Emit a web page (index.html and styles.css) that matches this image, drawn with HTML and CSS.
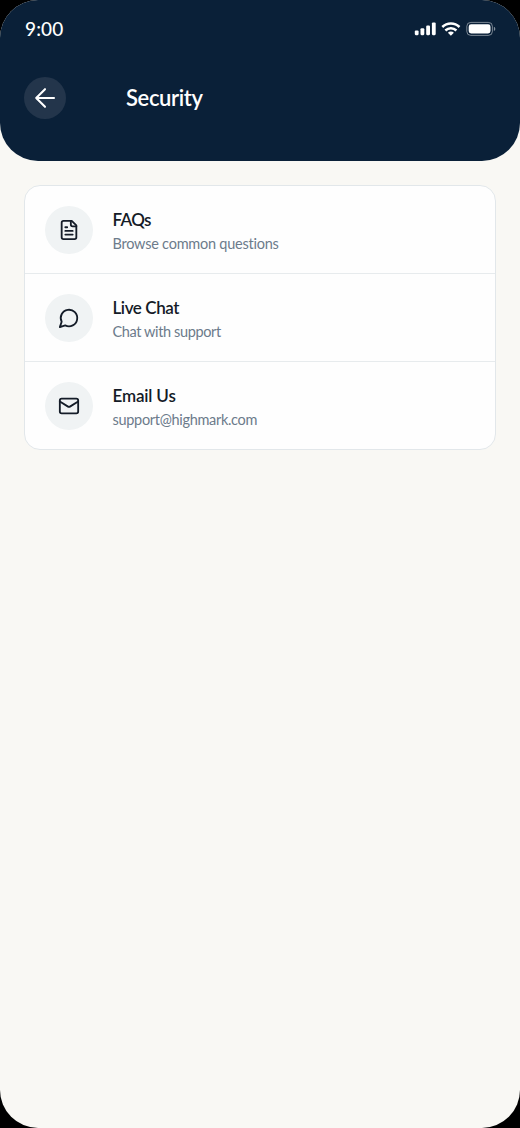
FILE: index.html
```html
<!DOCTYPE html>
<html lang="en">
<head>
<meta charset="utf-8">
<title>Security</title>
<link rel="stylesheet" href="styles.css">
</head>
<body>
<div class="screen">
  <header class="header">
    <div class="status">
      <span class="time">9:00</span>
      <svg class="status-icons" width="82" height="16" viewBox="0 0 82 16" fill="#fff">
        <rect x="0.8" y="9.4" width="3.8" height="4.8" rx="1.1"/>
        <rect x="6.5" y="7.2" width="3.8" height="7" rx="1.1"/>
        <rect x="12.2" y="4.6" width="3.8" height="9.6" rx="1.1"/>
        <rect x="17.9" y="1.4" width="3.8" height="12.8" rx="1.1"/>
        <g fill="none" stroke="#fff" stroke-width="2.5">
          <path d="M28.3 6a12.3 12.3 0 0 1 17.2 0"/>
          <path d="M31.4 9.5a7.9 7.9 0 0 1 11 0"/>
        </g>
        <path d="M33.9 11.8a4.2 4.2 0 0 1 6 0L36.9 14.8z"/>
        <rect x="52.8" y="1.4" width="25.6" height="13" rx="4" fill="none" stroke="#fff" stroke-opacity=".45"/>
        <rect x="54.7" y="3.3" width="21.8" height="9.2" rx="2.4"/>
        <path d="M79.9 5.7v4.4a2.4 2.4 0 0 0 0-4.4z" fill-opacity=".5"/>
      </svg>
    </div>
    <div class="nav">
      <div class="back">
        <svg width="26" height="26" viewBox="0 0 26 26" fill="none" stroke="#fff" stroke-width="2.1" stroke-linecap="round" stroke-linejoin="round"><path d="M22 13H4.2M13 4.2L4.2 13l8.8 8.8"/></svg>
      </div>
      <h1 class="title">Security</h1>
    </div>
  </header>
  <main class="card">
    <div class="row">
      <div class="bubble"><svg class="icon" viewBox="0 0 24 24"><path d="M15 2H6a2 2 0 0 0-2 2v16a2 2 0 0 0 2 2h12a2 2 0 0 0 2-2V7z"/><path d="M14 2v4a2 2 0 0 0 2 2h4M10 9H8M16 13H8M16 17H8"/></svg></div>
      <div class="text"><div class="name faq">FAQs</div><div class="desc browse">Browse common questions</div></div>
    </div>
    <div class="row">
      <div class="bubble"><svg class="icon" viewBox="0 0 24 24"><path d="M7.9 20A9 9 0 1 0 4 16.1L2 22z"/></svg></div>
      <div class="text"><div class="name live">Live Chat</div><div class="desc chat">Chat with support</div></div>
    </div>
    <div class="row">
      <div class="bubble"><svg class="icon" viewBox="0 0 24 24"><rect x="2" y="4" width="20" height="16" rx="2"/><path d="M22 7l-8.97 5.7a1.94 1.94 0 0 1-2.06 0L2 7"/></svg></div>
      <div class="text"><div class="name mail">Email Us</div><div class="desc address">support@highmark.com</div></div>
    </div>
  </main>
</div>
</body>
</html>
```

FILE: styles.css
```css
* { box-sizing: border-box; }
body { margin: 0; background: #000; font-family: Lato, "Noto Sans", sans-serif; }
.screen { height: 1128px; background: #f9f8f4; border-radius: 38px; overflow: hidden; }
.header { height: 161px; background: #0a2038; border-radius: 0 0 38px 38px; padding: 17px 24px 0; color: #fff; }
.status { display: flex; justify-content: space-between; align-items: center; height: 24px; padding-left: 1px; }
.time { font-size: 19px; font-weight: 500; line-height: 24px; letter-spacing: 0.15px; }
.nav { display: flex; align-items: center; gap: 60px; margin-top: 36px; }
.back { width: 42px; height: 42px; border-radius: 50%; background: #23354b; display: flex; align-items: center; justify-content: center; }
.title { margin: 0; font-size: 22px; font-weight: 600; line-height: 28px; letter-spacing: -0.38px; }
.card { margin: 24px 24px 0; border: 1px solid #e2e7ea; border-radius: 16px; background: #fefefe; overflow: hidden; }
.row { display: flex; align-items: center; gap: 19.5px; height: 88px; padding-left: 20px; border-bottom: 1px solid #e7ebed; }
.row:last-child { height: 87px; border-bottom: 0; }
.bubble { width: 48px; height: 48px; border-radius: 50%; background: #f0f3f4; display: flex; align-items: center; justify-content: center; }
.icon { width: 22px; height: 22px; fill: none; stroke: #141c28; stroke-width: 2; stroke-linecap: round; stroke-linejoin: round; }
.text { white-space: nowrap; padding-top: 6px; }
.name { font-size: 17px; font-weight: 600; line-height: 23px; color: #141b27; }
.desc { font-size: 14.5px; line-height: 26px; color: #6c7b8b; }
.faq { letter-spacing: -0.65px; }
.live { letter-spacing: -0.42px; }
.mail { letter-spacing: -0.16px; }
.browse { letter-spacing: -0.24px; }
.chat { letter-spacing: -0.38px; }
.address { letter-spacing: -0.31px; }
```
